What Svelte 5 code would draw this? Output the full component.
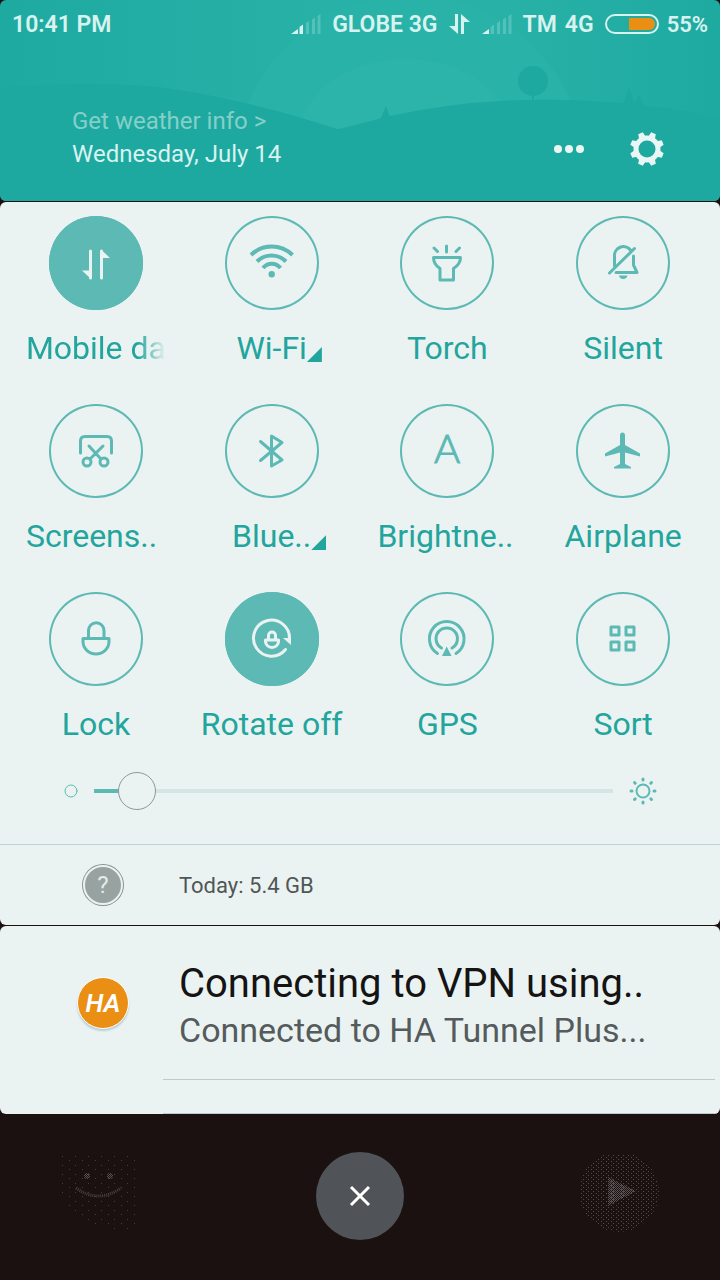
<script>
	let brightness = $state(5);

	// d is stroked, solid is filled, both on the 94px circle
	let tiles = $state([
		{ name: 'Mobile da', on: true, fade: true, d: 'M41.5 35V62M52.5 62V35', solid: 'M42 63L33 54.5H42ZM52 33.5L61 42H52Z' },
		{ name: 'Wi-Fi', more: true, thick: true, d: 'M26 39A29.5 29.5 0 0 1 67.5 39M32 45.5A20.5 20.5 0 0 1 61 45.5M38 52A11 11 0 0 1 55.5 52', solid: 'M43.5 58.3a3.2 3.2 0 1 0 6.4 0a3.2 3.2 0 1 0 -6.4 0Z' },
		{ name: 'Torch', d: 'M46.5 30V36M34 32L37.5 35.5M59.5 32L56 35.5M33.5 41.5H60.5C60.5 47 57.5 50 53.5 52.5V64H40V52.5C36 50 33.5 47 33.5 41.5Z' },
		{ name: 'Silent', d: 'M38.5 50V40.5A9 9 0 0 1 54.5 34M57.5 40V49L61 56.5H40M33.5 57L58.5 32.5', solid: 'M43 59.5H51.5A4.3 4 0 0 1 43 59.5Z' },
		{ name: 'Screens..', cut: true, d: 'M31.5 49V37Q31.5 32.5 36 32.5H58Q62.5 32.5 62.5 37V49M40 42L51.5 54.5M54 42L41.5 54.5M34 58a4 4 0 1 0 8 0a4 4 0 1 0 -8 0ZM51 58a4 4 0 1 0 8 0a4 4 0 1 0 -8 0Z' },
		{ name: 'Blue..', more: true, d: 'M35.5 37.5L57 56L46.5 62V32L57 38.5L35.5 56.5' },
		{ name: 'Brightne..', cut: true, letter: 'A' },
		{ name: 'Airplane', solid: 'M46.5 28.5C48.5 28.5 49 30 49 31.5V41L64 49.5V52.5L49 48.5V60L55 63V64.5H38V63L44 60V48.5L29 52.5V49.5L44 41V31.5C44 30 44.5 28.5 46.5 28.5Z' },
		{ name: 'Lock', d: 'M39.5 45.5V38.5A7.5 7.5 0 0 1 55 38.5V45.5M34 46.5H60V49.5A13 12.5 0 0 1 34 49.5Z' },
		{ name: 'Rotate off', on: true, d: 'M60.5 57.5A18 18 0 1 1 64.5 47M43.5 47V43.5A3.5 3.5 0 0 1 50.5 43.5V47M40.5 48H53.5V49.5A6.5 6 0 0 1 40.5 49.5Z', solid: 'M58 46H66V53Z' },
		{ name: 'GPS', d: 'M37.5 61.5A17.3 17.3 0 1 1 56 61.5M41.5 56A10.7 10.7 0 1 1 52 56', solid: 'M46.7 54.5L51.5 64H42Z' },
		{ name: 'Sort', d: 'M35 35H43V43H35ZM50 35H58V43H50ZM35 50H43V58H35ZM50 50H58V58H50Z' }
	]);

	const teeth = [22.5, 67.5, 112.5, 157.5, 202.5, 247.5, 292.5, 337.5];
	const rays = [0, 45, 90, 135, 180, 225, 270, 315];
</script>

{#snippet signal(bars)}
	<svg class="signal" viewBox="0 0 30 20" aria-hidden="true">
		<path d="M0 20L7 15V20Z" />
		<path class:dim={bars < 2} d="M8.5 13L12 10.5V20H8.5Z" />
		<path class="dim" d="M15 9L18 7V20H15ZM21 5.5L24 3.5V20H21ZM26.5 2L29.5 0V20H26.5Z" />
	</svg>
{/snippet}

<main>
	<header>
		<svg class="scene" viewBox="0 0 720 201" preserveAspectRatio="none" aria-hidden="true">
			<defs>
				<linearGradient id="sky">
					<stop offset="0" stop-color="#1faaa1" />
					<stop offset="0.45" stop-color="#27b1a7" />
					<stop offset="0.7" stop-color="#27b1a7" />
					<stop offset="1" stop-color="#1faaa1" />
				</linearGradient>
			</defs>
			<rect width="720" height="201" fill="url(#sky)" />
			<circle cx="410" cy="170" r="175" fill="#28b2a8" />
			<ellipse cx="405" cy="135" rx="105" ry="76" fill="#2cb4aa" />
			<path d="M0 88Q70 81 150 86Q240 97 340 130L420 201H0Z" fill="#1da8a0" />
			<path d="M200 201V158Q300 140 390 116Q540 83 720 117V201Z" fill="#1da8a0" />
			<circle cx="533" cy="81" r="15" fill="#1da8a0" />
			<path d="M532 94H534V104H532ZM386 106L391 120H380ZM629 87L635 106H623ZM639 94L644 106H634Z" fill="#1da8a0" />
		</svg>

		<div class="status">
			<span class="time">10:41 PM</span>
			{@render signal(2)}
			<span>GLOBE 3G</span>
			<svg class="arrows" viewBox="0 0 22 20" aria-hidden="true">
				<path d="M6 0H9V20L0 12H6ZM12 20V0L21 8H15V20Z" />
			</svg>
			{@render signal(1)}
			<span class="carrier">TM <b>4G</b></span>
			<svg class="battery" viewBox="0 0 54 20" aria-hidden="true">
				<rect x="1" y="1" width="52" height="18" rx="9" />
				<path d="M24 4H44A6 6 0 0 1 44 16H24Z" />
			</svg>
			<span class="percent">55%</span>
		</div>

		<div class="info">
			<div class="date">
				<a href="#weather">Get weather info &gt;</a>
				<span>Wednesday, July 14</span>
			</div>
			<div class="actions">
				<button aria-label="More">
					<svg width="30" height="34" viewBox="0 0 30 34">
						<circle cx="4" cy="17" r="4" />
						<circle cx="15" cy="17" r="4" />
						<circle cx="26" cy="17" r="4" />
					</svg>
				</button>
				<button aria-label="Settings">
					<svg width="34" height="34" viewBox="0 0 34 34">
						<circle class="ring" cx="17" cy="17" r="11" />
						{#each teeth as angle}
							<path d="M13.5 5L14.5 0H19.5L20.5 5Z" transform="rotate({angle} 17 17)" />
						{/each}
					</svg>
				</button>
			</div>
		</div>
	</header>

	<section class="panel">
		<div class="tiles">
			{#each tiles as tile}
				<button class="tile" aria-pressed={!!tile.on} onclick={() => (tile.on = !tile.on)}>
					<span class="circle" class:on={tile.on}>
						<svg viewBox="0 0 94 94" aria-hidden="true">
							{#if tile.d}
								<path class="line" class:thick={tile.thick} d={tile.d} />
							{/if}
							{#if tile.solid}
								<path class="solid" d={tile.solid} />
							{/if}
							{#if tile.letter}
								<text x="47" y="59" text-anchor="middle">{tile.letter}</text>
							{/if}
						</svg>
					</span>
					<span class="label" class:cut={tile.cut} class:fade={tile.fade}>
						<span class:more={tile.more}>{tile.name}</span>
					</span>
				</button>
			{/each}
		</div>

		<div class="brightness">
			<svg width="14" height="14" viewBox="0 0 14 14" aria-hidden="true">
				<circle cx="7" cy="7" r="6" />
			</svg>
			<input
				type="range"
				min="0"
				max="100"
				aria-label="Brightness"
				bind:value={brightness}
				style="--level: {brightness}%"
			/>
			<svg width="28" height="28" viewBox="0 0 28 28" aria-hidden="true">
				<circle class="sun" cx="14" cy="14" r="6.5" />
				{#each rays as angle}
					<path d="M14 2V3" transform="rotate({angle} 14 14)" />
				{/each}
			</svg>
		</div>

		<div class="usage">
			<span class="thumb"><span class="help">?</span></span>
			<span>Today: 5.4 GB</span>
		</div>
	</section>

	<section class="panel">
		<article>
			<div class="thumb"><span class="logo">HA</span></div>
			<div class="message">
				<h2>Connecting to VPN using..</h2>
				<p>Connected to HA Tunnel Plus...</p>
			</div>
		</article>
		<hr />
		<div class="next"></div>
	</section>

	<footer>
		<svg class="ghost" viewBox="0 0 82 82" aria-hidden="true">
			<path class="dots" d="M1 0H77V76H57L13 62L1 40Z" />
			<circle class="eye" cx="27" cy="21" r="3" />
			<circle class="eye" cx="50" cy="21" r="3" />
			<path class="smile" d="M16 33Q38 49 61 33" />
		</svg>
		<button class="close" aria-label="Clear notifications">
			<svg width="22" height="22" viewBox="0 0 22 22">
				<path d="M2 2L20 20M20 2L2 20" />
			</svg>
		</button>
		<svg class="ghost" viewBox="0 0 82 82" aria-hidden="true">
			<defs>
				<pattern id="grain" width="5" height="4" patternUnits="userSpaceOnUse">
					<path d="M0 0H1V1H0ZM3 2H4V3H3Z" fill="#514b4a" />
				</pattern>
				<pattern id="sparse" width="13" height="9" patternUnits="userSpaceOnUse">
					<path d="M2 1H3V2H2ZM9 5H10V6H9Z" fill="#443e3d" />
				</pattern>
				<pattern id="dither" width="2" height="2" patternUnits="userSpaceOnUse">
					<path d="M0 0H1V1H0ZM1 1H2V2H1Z" fill="#5a5454" />
				</pattern>
			</defs>
			<circle class="grain" cx="41" cy="37" r="40" />
			<path class="play" d="M30 22L58 36L30 51Z" />
		</svg>
	</footer>
</main>

<style>
	:global(body) {
		background: #1a1110;
	}

	main {
		display: flex;
		flex-direction: column;
		font-family: Roboto, 'Liberation Sans', sans-serif;
		gap: 1px;
		min-height: 100vh;
	}

	button {
		background: none;
		border: 0;
		color: inherit;
		cursor: pointer;
		font: inherit;
		padding: 0;
	}

	svg {
		display: block;
		flex: none;
	}

	header {
		border-radius: 6px;
		color: #d8f3ef;
		overflow: hidden;
		position: relative;
	}

	.scene {
		height: 100%;
		inset: 0;
		position: absolute;
		width: 100%;
	}

	.status {
		align-items: center;
		display: flex;
		font-size: 23px;
		font-weight: 600;
		gap: 11px;
		height: 48px;
		padding: 0 12px;
		position: relative;
		white-space: nowrap;
	}

	.time {
		margin-right: auto;
	}

	.signal {
		fill: #d8f3ef;
		height: 20px;
		width: 30px;
	}

	.dim {
		opacity: 0.25;
	}

	.arrows {
		fill: #d8f3ef;
		height: 20px;
		width: 22px;
	}

	.carrier {
		display: flex;
		gap: 8px;
	}

	.carrier b {
		font-weight: 600;
	}

	.battery {
		height: 20px;
		width: 54px;
	}

	.battery rect {
		fill: none;
		stroke: #d8f3ef;
		stroke-width: 2;
	}

	.battery path {
		fill: #ea8e14;
	}

	.percent {
		font-size: 22px;
		margin-left: -3px;
	}

	.info {
		align-items: flex-end;
		display: flex;
		justify-content: space-between;
		padding: 57px 56px 30px 72px;
		position: relative;
	}

	.date {
		display: flex;
		flex-direction: column;
		font-size: 24px;
		line-height: 33px;
	}

	.date a {
		color: #84d0c9;
		text-decoration: none;
	}

	.actions {
		align-items: center;
		display: flex;
		gap: 46px;
		height: 44px;
	}

	.actions svg {
		fill: #eaf6f4;
	}

	.actions .ring {
		fill: none;
		stroke: #eaf6f4;
		stroke-width: 5;
	}

	.panel {
		background: #ebf3f2;
		border-radius: 6px;
		overflow: hidden;
	}

	.tiles {
		display: grid;
		grid-template-columns: repeat(4, 1fr);
		padding: 14px 9px 0 8px;
		row-gap: 37px;
	}

	.tile {
		align-items: center;
		display: flex;
		flex-direction: column;
		gap: 19px;
	}

	.circle {
		border-radius: 50%;
		box-shadow: inset 0 0 0 2px #5cb9b4;
		color: #5cb9b4;
		height: 94px;
		width: 94px;
	}

	.circle.on {
		background: #5cb9b4;
		color: #ebf3f2;
	}

	.line {
		fill: none;
		stroke: currentColor;
		stroke-linecap: round;
		stroke-linejoin: round;
		stroke-width: 3;
	}

	.thick {
		stroke-linecap: butt;
		stroke-width: 4;
	}

	.solid {
		fill: currentColor;
	}

	.circle text {
		fill: currentColor;
		font-family: Lato, sans-serif;
		font-size: 40px;
		font-weight: 300;
		stroke: currentColor;
		stroke-width: 1;
	}

	.label {
		color: #22a59d;
		font-size: 32px;
		line-height: 38px;
		white-space: nowrap;
	}

	.cut,
	.fade {
		overflow: hidden;
		text-align: left;
		width: 140px;
	}

	.fade {
		mask-image: linear-gradient(to right, #000 80%, transparent);
	}

	.more {
		position: relative;
	}

	.more::after {
		background: #22a59d;
		bottom: 5px;
		clip-path: polygon(100% 0, 100% 100%, 0 100%);
		content: '';
		height: 15px;
		left: 100%;
		position: absolute;
		width: 15px;
	}

	.brightness {
		align-items: center;
		display: flex;
		gap: 16px;
		height: 40px;
		margin: 28px 0 33px;
		padding: 0 63px 0 64px;
	}

	.brightness svg {
		fill: none;
		stroke: #5cb9b4;
		stroke-linecap: round;
	}

	.brightness .sun {
		stroke-width: 2;
	}

	.brightness path {
		stroke-width: 3;
	}

	input {
		appearance: none;
		background: linear-gradient(#5cb9b4, #5cb9b4) left center / var(--level) 4px no-repeat,
			linear-gradient(#d3e6e3, #d3e6e3) center / 100% 4px no-repeat;
		flex: 1;
		height: 38px;
		margin: 0;
		min-width: 0;
	}

	input::-webkit-slider-thumb {
		appearance: none;
		background: #ebf3f2;
		border: 1px solid #8d9897;
		border-radius: 50%;
		box-sizing: border-box;
		height: 38px;
		width: 38px;
	}

	.usage {
		align-items: center;
		border-top: 1px solid #b9d5d1;
		color: #505656;
		display: flex;
		font-size: 22px;
		height: 80px;
	}

	.thumb {
		display: flex;
		flex: none;
		justify-content: center;
		padding-left: 27px;
		width: 152px;
	}

	.help {
		background: #98a2a0;
		border: 2px solid #ebf3f2;
		border-radius: 50%;
		box-shadow: 0 0 0 1px #89918f;
		box-sizing: border-box;
		color: #e3ecea;
		font-size: 24px;
		height: 40px;
		line-height: 36px;
		text-align: center;
		width: 40px;
	}

	article {
		align-items: flex-start;
		display: flex;
		padding: 35px 0 26px;
	}

	.logo {
		background: #ea8e14;
		border: 1px solid #fff;
		border-radius: 50%;
		box-shadow: 0 2px 2px #b5cfd6;
		color: #fff;
		font-size: 26px;
		font-style: italic;
		font-weight: 600;
		height: 50px;
		line-height: 50px;
		margin-top: 16px;
		text-align: center;
		width: 50px;
	}

	.message {
		line-height: 46px;
		min-width: 0;
		white-space: nowrap;
	}

	h2 {
		color: #151313;
		font-size: 40px;
		font-weight: 400;
		margin: 0;
	}

	p {
		color: #555b5c;
		font-size: 34px;
		margin: 0;
	}

	hr {
		background: #b9cdca;
		border: 0;
		height: 1px;
		margin: 0 5px 0 163px;
	}

	.next {
		border-bottom: 1px solid #b9cdca;
		height: 33px;
		margin-left: 163px;
	}

	footer {
		align-items: center;
		display: flex;
		flex: 1;
		justify-content: space-between;
		padding: 0 60px 4px;
	}

	.ghost {
		height: 82px;
		width: 82px;
	}

	.grain {
		fill: url(#grain);
	}

	.dots {
		fill: url(#sparse);
	}

	.eye,
	.play {
		fill: url(#dither);
	}

	.smile {
		fill: none;
		stroke: #484242;
		stroke-dasharray: 1 1;
		stroke-width: 3;
	}

	.close {
		align-items: center;
		background: #505357;
		border-radius: 50%;
		display: flex;
		height: 88px;
		justify-content: center;
		width: 88px;
	}

	.close path {
		stroke: #fff;
		stroke-width: 3;
	}
</style>
